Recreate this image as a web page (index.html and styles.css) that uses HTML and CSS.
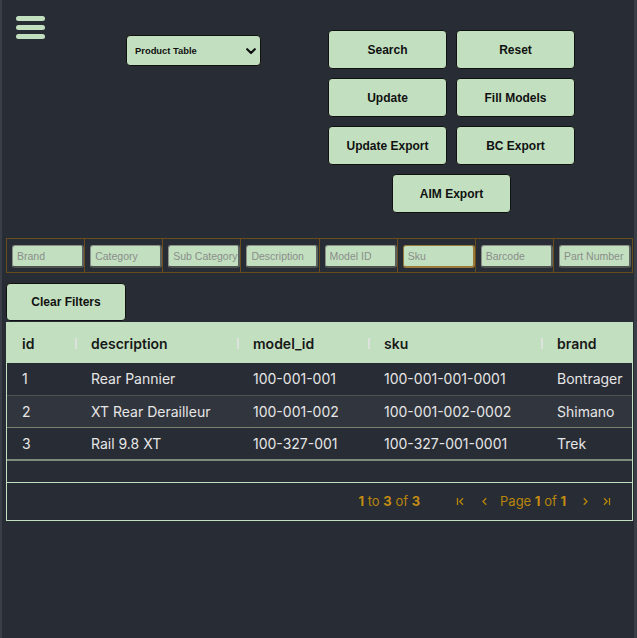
FILE: index.html
```html
<!DOCTYPE html>
<html lang="en">
<head>
<meta charset="utf-8">
<title>Product Table</title>
<link rel="stylesheet" href="styles.css">
</head>
<body>
<div class="page">
  <header class="top">
    <button class="burger" aria-label="Menu"><span></span><span></span><span></span></button>
    <div class="select">
      <span>Product Table</span>
      <svg class="chev" width="10" height="7" viewBox="0 0 10 7"><path d="M1.2 1.2 L5 5 L8.8 1.2" fill="none" stroke="#111" stroke-width="2.2" stroke-linecap="round" stroke-linejoin="round"/></svg>
    </div>
    <div class="actions">
      <button class="btn">Search</button>
      <button class="btn">Reset</button>
      <button class="btn">Update</button>
      <button class="btn">Fill Models</button>
      <button class="btn">Update Export</button>
      <button class="btn">BC Export</button>
      <button class="btn wide">AIM Export</button>
    </div>
  </header>

  <div class="filters">
    <div class="fcell"><input class="finput" placeholder="Brand"></div>
    <div class="fcell"><input class="finput" placeholder="Category"></div>
    <div class="fcell"><input class="finput" placeholder="Sub Category"></div>
    <div class="fcell"><input class="finput" placeholder="Description"></div>
    <div class="fcell"><input class="finput" placeholder="Model ID"></div>
    <div class="fcell"><input class="finput focus" placeholder="Sku"></div>
    <div class="fcell"><input class="finput" placeholder="Barcode"></div>
    <div class="fcell"><input class="finput" placeholder="Part Number"></div>
  </div>

  <button class="btn clear">Clear Filters</button>

  <div class="grid">
    <div class="row head">
      <div class="cell">id<i class="sep"></i></div>
      <div class="cell">description<i class="sep"></i></div>
      <div class="cell">model_id<i class="sep"></i></div>
      <div class="cell">sku<i class="sep"></i></div>
      <div class="cell">brand</div>
    </div>
    <div class="row">
      <div class="cell">1</div>
      <div class="cell">Rear Pannier</div>
      <div class="cell">100-001-001</div>
      <div class="cell">100-001-001-0001</div>
      <div class="cell">Bontrager</div>
    </div>
    <div class="row alt">
      <div class="cell">2</div>
      <div class="cell">XT Rear Derailleur</div>
      <div class="cell">100-001-002</div>
      <div class="cell">100-001-002-0002</div>
      <div class="cell">Shimano</div>
    </div>
    <div class="row last">
      <div class="cell">3</div>
      <div class="cell">Rail 9.8 XT</div>
      <div class="cell">100-327-001</div>
      <div class="cell">100-327-001-0001</div>
      <div class="cell">Trek</div>
    </div>
    <div class="empty"></div>
    <div class="foot">
      <span class="summary"><b>1</b> to <b>3</b> of <b>3</b></span>
      <span class="pager">
        <svg class="pi" width="9" height="9" viewBox="0 0 9 9"><path d="M1.5 1 V8 M7 1.2 L3.8 4.5 L7 7.8" fill="none" stroke="currentColor" stroke-width="1.3"/></svg>
        <svg class="pi" width="9" height="9" viewBox="0 0 9 9"><path d="M6.2 1.2 L3 4.5 L6.2 7.8" fill="none" stroke="currentColor" stroke-width="1.3"/></svg>
        <span class="pages">Page <b>1</b> of <b>1</b></span>
        <svg class="pi" width="9" height="9" viewBox="0 0 9 9"><path d="M2.8 1.2 L6 4.5 L2.8 7.8" fill="none" stroke="currentColor" stroke-width="1.3"/></svg>
        <svg class="pi" width="9" height="9" viewBox="0 0 9 9"><path d="M7.5 1 V8 M2 1.2 L5.2 4.5 L2 7.8" fill="none" stroke="currentColor" stroke-width="1.3"/></svg>
      </span>
    </div>
  </div>
</div>
</body>
</html>
```

FILE: styles.css
```css
html, body {
  margin: 0;
  padding: 0;
  background: #282c34;
}

.page {
  box-sizing: border-box;
  min-height: 638px;
  width: 637px;
  border-left: 2px solid #3a3e46;
  border-right: 3px solid #3a3e46;
  padding-left: 4px;
  font-family: "Liberation Sans", Arial, sans-serif;
}

.top {
  display: flex;
  align-items: flex-start;
  padding: 16px 0 0 10px;
}

.burger {
  display: flex;
  flex-direction: column;
  gap: 4px;
  width: 29px;
  padding: 0;
  margin: 0;
  border: 0;
  background: none;
}
.burger span {
  display: block;
  width: 29px;
  height: 5px;
  border-radius: 3px;
  background: #c2e0c0;
}

.select {
  box-sizing: border-box;
  margin: 19px 0 0 81px;
  width: 135px;
  height: 31px;
  display: flex;
  align-items: center;
  justify-content: space-between;
  padding: 0 4px 0 8px;
  background: #c2e0c0;
  border: 1px solid #111;
  border-radius: 4px;
  font-size: 9.4px;
  font-weight: bold;
  color: #111;
}
.chev { margin-top: 1px; }

.actions {
  margin: 14px 0 0 67px;
  display: grid;
  grid-template-columns: 119px 119px;
  column-gap: 9px;
  row-gap: 9px;
}

.btn {
  box-sizing: border-box;
  width: 119px;
  height: 39px;
  margin: 0;
  padding: 0;
  background: #c2e0c0;
  border: 1px solid #111;
  border-radius: 4px;
  font-family: "Liberation Sans", Arial, sans-serif;
  font-size: 12px;
  font-weight: bold;
  color: #111;
}
.btn.wide {
  grid-column: 1 / span 2;
  justify-self: center;
}

.filters {
  box-sizing: border-box;
  margin-top: 25px;
  width: 627px;
  display: grid;
  grid-template-columns: repeat(8, 1fr);
  border: 1px solid #6a4d1c;
}
.fcell {
  padding: 6px 0 4px 5px;
  border-right: 1px solid #6a4d1c;
  min-width: 0;
}
.fcell:last-child { border-right: 0; }

.finput {
  box-sizing: border-box;
  display: block;
  width: 72px;
  height: 23px;
  margin: 0;
  padding: 0 0 0 4px;
  background: #c2e0c0;
  border: 1px solid #8a8f88;
  border-right: 2px solid #5e625e;
  border-bottom: 2px solid #4e524e;
  border-radius: 3px;
  font-family: "Liberation Sans", Arial, sans-serif;
  font-size: 10.5px;
  color: #333;
}
.finput::placeholder { color: #8a8d89; }
.finput.focus { border-color: #9a7a3a; }

.clear {
  display: block;
  margin-top: 10px;
  width: 120px;
  height: 38px;
}

.grid {
  box-sizing: border-box;
  width: 627px;
  margin-top: 1px;
  border: 1px solid #c2e0c0;
  font-family: Inter, "Noto Sans", sans-serif;
  font-size: 14px;
  color: #e6e6e6;
}

.row {
  box-sizing: border-box;
  display: grid;
  grid-template-columns: 69px 162px 131px 173px 1fr;
  height: 32.67px;
  align-items: center;
  border-bottom: 1px solid #4c5650;
  background: #282c34;
}
.row.alt { background: #31353d; border-bottom-color: #75836f; }
.row.last { border-bottom: 2px solid #7d8c79; }

.row.head {
  height: 40px;
  background: #c2e0c0;
  color: #181818;
  font-weight: 600;
  border-bottom: 0;
}

.cell {
  position: relative;
  padding-left: 15px;
  white-space: nowrap;
  overflow: hidden;
}
.head .cell { overflow: visible; }
.sep {
  position: absolute;
  right: -1px;
  top: 50%;
  margin-top: -5px;
  width: 2px;
  height: 11px;
  background: #dde2dd;
}

.empty { height: 21px; }

.foot {
  box-sizing: border-box;
  height: 38px;
  border-top: 1px solid #c2e0c0;
  display: flex;
  align-items: center;
  justify-content: flex-end;
  padding-right: 21px;
  color: #b8860b;
  font-size: 13px;
}
.foot b { font-weight: 700; color: #c48d12; }
.summary { margin-right: 36px; }
.pager {
  display: flex;
  align-items: center;
}
.pi { display: block; }
.pager .pi:nth-child(1) { margin-right: 15px; }
.pager .pi:nth-child(2) { margin-right: 11px; }
.pages { margin-right: 15px; }
.pager .pi:nth-child(4) { margin-right: 12px; }
```
